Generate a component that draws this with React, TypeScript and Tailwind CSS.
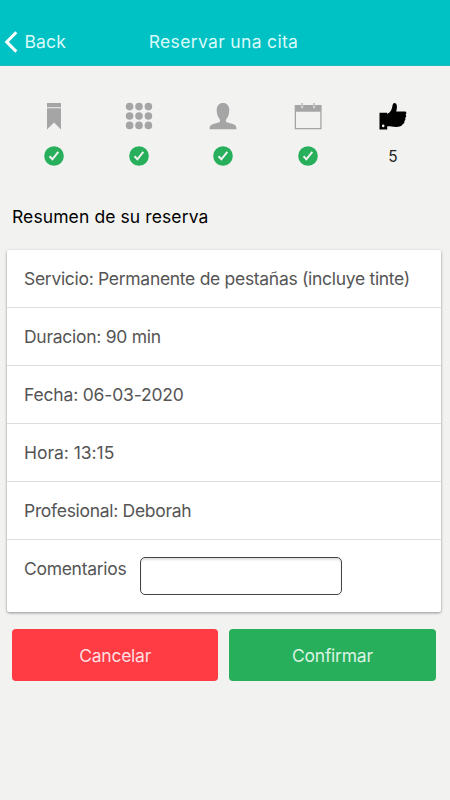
import { useState } from 'react';
import type { ReactNode } from 'react';

const details = [
  { label: 'Servicio', value: 'Permanente de pestañas (incluye tinte)', spacing: 'tracking-[-0.3px]' },
  { label: 'Duracion', value: '90 min', spacing: 'tracking-[-0.27px]' },
  { label: 'Fecha', value: '06-03-2020', spacing: 'tracking-[-0.18px]' },
  { label: 'Hora', value: '13:15', spacing: 'tracking-[-0.03px]' },
  { label: 'Profesional', value: 'Deborah', spacing: 'tracking-[-0.3px]' },
];

function StepIcon({ children }: { children: ReactNode }) {
  return (
    <svg className="w-7 h-7" viewBox="0 0 28 28" fill="currentColor">
      {children}
    </svg>
  );
}

function CheckBadge() {
  return (
    <svg className="w-5 h-5" viewBox="0 0 20 20" fill="none">
      <circle cx="10" cy="10" r="9.8" fill="#27af5b" />
      <path d="M5.5 10.300l2.900 3 5.900-7.400" stroke="#f2f2f1" strokeWidth="2" />
    </svg>
  );
}

const dots = [4.6, 14, 23.4];

const steps = [
  {
    name: 'servicio',
    icon: (
      <StepIcon>
        <path d="M7 1h14v4.2H7zM7 6.2h14v21.2l-7-6.800-7 6.800z" />
      </StepIcon>
    ),
  },
  {
    name: 'categoria',
    icon: (
      <StepIcon>
        {dots.map((cy) => dots.map((cx) => <circle key={`${cx}-${cy}`} cx={cx} cy={cy} r="3.8" />))}
      </StepIcon>
    ),
  },
  {
    name: 'profesional',
    icon: (
      <StepIcon>
        <path d="M14 1c3.900 0 6.300 2.700 6.300 7 0 4.500-1.500 7.700-3.200 9.400-.6 1.900.1 2.700 1.400 3.100l5.300 1.600c2.700.8 3.700 2 3.700 5.200H.5c0-3.200 1-4.400 3.700-5.200l5.300-1.600c1.300-.4 2-1.200 1.400-3.100C9.200 15.700 7.700 12.500 7.700 8c0-4.300 2.400-7 6.300-7z" />
      </StepIcon>
    ),
  },
  {
    name: 'fecha',
    icon: (
      <StepIcon>
        <path
          fillRule="evenodd"
          d="M.7 3H7v2.200a1.100 1.100 0 0 0 2.200 0V3H19v2.200a1.100 1.100 0 0 0 2.200 0V3h6.400v24.300H.7zM2 9.700V26h24.300V9.700z"
        />
        <path d="M7.500 1h1.200v4.500H7.500zM19.500 1h1.200v4.500h-1.200z" />
      </StepIcon>
    ),
  },
];

export default function App() {
  const [comments, setComments] = useState('');

  return (
    <div className="w-full min-h-screen bg-[#f2f2f1] font-['Inter','Liberation_Sans',sans-serif] text-[17.5px] leading-6">
      {/* Top Bar */}
      <header className="h-[66px] grid grid-cols-[1fr_auto_1fr] items-end pb-[11px] bg-[#00c1c3] border-b border-[#25babb] text-[#d9fafa]">
        <button className="flex items-center pl-1 gap-[6.5px]">
          <svg className="w-3.5 h-6" viewBox="0 0 14 24" fill="none" stroke="#ffffff" strokeWidth="3">
            <path d="M12.300 2.200L2.700 11.900l9.600 9.700" />
          </svg>
          <span className="tracking-[0.15px]">Back</span>
        </button>
        <h1 className="-ml-[3px] tracking-[0.33px]">Reservar una cita</h1>
      </header>

      {/* Steps */}
      <ol className="flex w-[424px] ml-[11.5px] pt-9">
        {steps.map((step) => (
          <li key={step.name} className="flex-1 flex flex-col items-center gap-4 text-[#a5a5a5]">
            {step.icon}
            <CheckBadge />
          </li>
        ))}
        <li className="flex-1 flex flex-col items-center gap-4 text-black">
          <StepIcon>
            <path
              fillRule="evenodd"
              d="M.5 10.800h7.700v1.100c3-.9 4.300-3.500 4.900-6.300.3-1.600.4-3.600 1.600-4.400 1.600-.6 3 .8 3.200 2.800.2 2-.3 3.900-.7 5.600h8.600c1.900 0 2 2.500.8 3.100 1 .9.700 2.700-.5 3.200.7 1 .3 2.700-.8 3.100.5 1.300-.1 2.700-1.400 3-1.200 2.300-3.500 3-6.700 3-4 0-5.400-.7-9-.7v3.200H.5zM4.200 22.600a1.300 1.300 0 1 0 0 2.600 1.300 1.300 0 0 0 0-2.600z"
            />
          </StepIcon>
          <span className="text-[15.5px] leading-[21px] text-[#222222]">5</span>
        </li>
      </ol>

      <h2 className="mt-[38px] ml-3 text-black tracking-[0.1px]">Resumen de su reserva</h2>

      {/* Summary */}
      <section className="mt-[21px] ml-[7px] mr-[9px] h-[362px] bg-white rounded-[2px] shadow-[0_1px_3px_rgba(0,0,0,0.4)] text-[#555555]">
        {details.map((detail) => (
          <p
            key={detail.label}
            className={`h-[58px] pl-[17px] flex items-center border-b border-[#dedede] whitespace-nowrap ${detail.spacing}`}
          >
            {detail.label}: {detail.value}
          </p>
        ))}
        <label className="flex pl-[17px] pt-[17px] tracking-[-0.3px]">
          <span>Comentarios</span>
          <input
            value={comments}
            onChange={(e) => setComments(e.target.value)}
            className="w-[202px] h-[38px] ml-[13.500px] px-2 bg-white border border-[#444444] rounded-[5px] shadow-[inset_0_2px_2px_rgba(0,0,0,0.12)] outline-none"
          />
        </label>
      </section>

      {/* Actions */}
      <div className="flex gap-[11px] mt-[17px] ml-3 mr-[14.5px] tracking-[-0.25px]">
        <button className="flex-1 h-[52px] pt-0.5 rounded-[4px] bg-[#ff3b43] text-[#ffdfe0]">Cancelar</button>
        <button className="flex-1 h-[52px] pt-0.5 rounded-[4px] bg-[#27af5b] text-[#dcf3e4]">Confirmar</button>
      </div>
    </div>
  );
}
